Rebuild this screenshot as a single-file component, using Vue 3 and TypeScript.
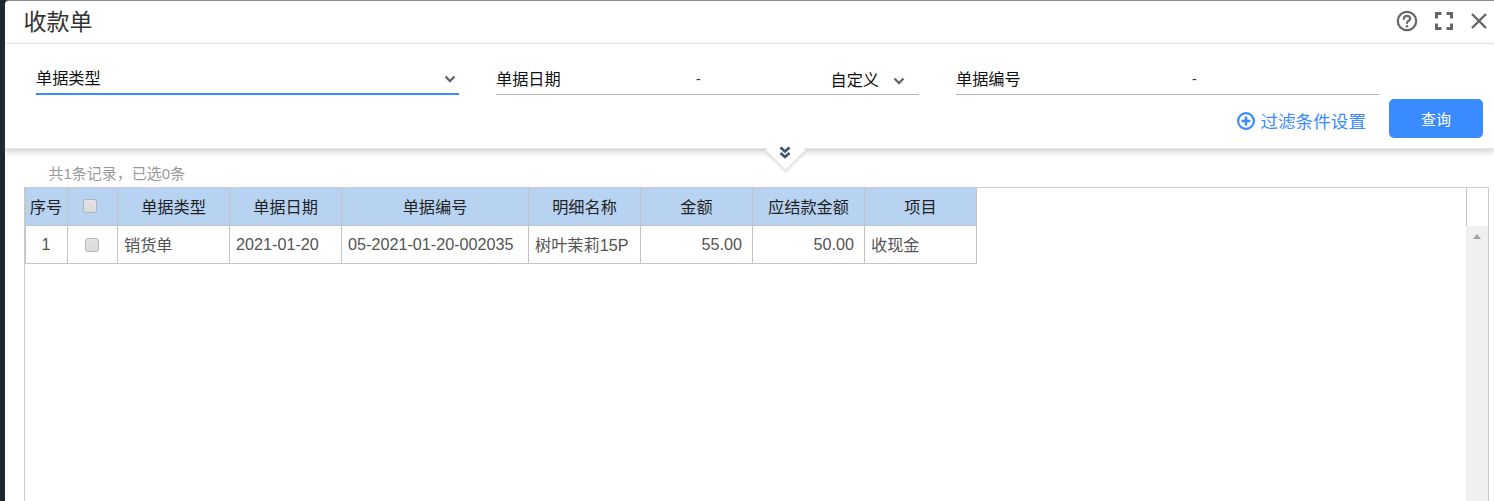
<script setup lang="ts">
interface Column { label: string; width: number; align: string; key: string }
const columns: Column[] = [
  { label: '单据类型', width: 112, align: 'left', key: 'type' },
  { label: '单据日期', width: 112, align: 'left', key: 'date' },
  { label: '单据编号', width: 187, align: 'left', key: 'code' },
  { label: '明细名称', width: 112, align: 'left', key: 'name' },
  { label: '金额', width: 112, align: 'right', key: 'amount' },
  { label: '应结款金额', width: 112, align: 'right', key: 'due' },
  { label: '项目', width: 112, align: 'left', key: 'item' },
]
const row: Record<string, string> = {
  type: '销货单', date: '2021-01-20', code: '05-2021-01-20-002035',
  name: '树叶茉莉15P', amount: '55.00', due: '50.00', item: '收现金',
}
</script>

<template>
  <div class="page">
    <div class="rail"></div>
    <div class="modal">
      <header class="head">
        <h1 class="title">收款单</h1>
        <div class="tools">
          <svg width="22" height="22" viewBox="0 0 22 22" fill="none" stroke="#666" stroke-width="2.2">
            <circle cx="11" cy="11" r="9.2" />
            <path d="M7.8 8.8c0-1.9 1.5-3 3.2-3s3.2 1 3.2 2.7c0 2.4-3.2 2.4-3.2 4.6" stroke-linecap="round" />
            <circle cx="11" cy="16.2" r="1.2" fill="#666" stroke="none" />
          </svg>
          <svg width="18" height="18" viewBox="0 0 18 18" fill="none" stroke="#666" stroke-width="3">
            <path d="M1.5 6.5v-5h5M11.5 1.5h5v5M16.5 11.5v5h-5M6.5 16.5h-5v-5" />
          </svg>
          <svg width="18" height="18" viewBox="0 0 18 18" fill="none" stroke="#666" stroke-width="2.4">
            <path d="M2 2l14 14M16 2L2 16" />
          </svg>
        </div>
      </header>

      <section class="filter">
        <div class="fields">
          <div class="field active">
            <span class="label">单据类型</span>
            <svg class="chev" width="12" height="8" viewBox="0 0 12 8" fill="none" stroke="#666" stroke-width="2.4">
              <path d="M1.5 1.5L6 6l4.5-4.5" />
            </svg>
          </div>
          <div class="field">
            <span class="label wide">单据日期</span>
            <span class="dash dash-date">-</span>
            <span class="custom">自定义</span>
            <svg class="chev" width="12" height="8" viewBox="0 0 12 8" fill="none" stroke="#666" stroke-width="2.4">
              <path d="M1.5 1.5L6 6l4.5-4.5" />
            </svg>
          </div>
          <div class="field">
            <span class="label wide">单据编号</span>
            <span class="dash dash-code">-</span>
          </div>
        </div>
        <div class="actions">
          <a class="setting">
            <svg width="18" height="18" viewBox="0 0 18 18" fill="none" stroke="#3a8bff">
              <circle cx="9" cy="9" r="7.9" stroke-width="2.2" />
              <path d="M9 4.6v8.8M4.6 9h8.8" stroke-width="2.6" />
            </svg>
            过滤条件设置
          </a>
          <button class="query">查询</button>
        </div>
        <div class="fold">
          <svg width="14" height="14" viewBox="0 0 14 14" fill="none" stroke="#3f5570" stroke-width="2.8">
            <path d="M2.5 1.5L7 5.5l4.5-4M2.5 7L7 11l4.5-4" />
          </svg>
        </div>
      </section>

      <p class="summary">共1条记录，已选0条</p>

      <div class="grid-panel">
        <div class="grid-scroll">
          <table class="grid">
            <colgroup>
              <col style="width: 42px" />
              <col style="width: 50px" />
              <col v-for="c in columns" :key="c.key" :style="{ width: c.width + 'px' }" />
            </colgroup>
            <thead>
              <tr>
                <th>序号</th>
                <th><span class="check head-check"></span></th>
                <th v-for="c in columns" :key="c.key">{{ c.label }}</th>
              </tr>
            </thead>
            <tbody>
              <tr>
                <td class="center">1</td>
                <td class="center"><span class="check"></span></td>
                <td v-for="c in columns" :key="c.key" :class="c.align">{{ row[c.key] }}</td>
              </tr>
            </tbody>
          </table>
        </div>
        <div class="scrollbar">
          <div class="corner"></div>
          <div class="track"><span class="arrow"></span></div>
        </div>
      </div>
    </div>
  </div>
</template>

<style>
html, body { margin: 0; background: #fff; overflow: hidden; }
</style>

<style scoped>
.page {
  display: flex;
  height: 501px;
  overflow: hidden;
  font-family: "Liberation Sans", "Noto Sans CJK SC", sans-serif;
  background: #1b2733;
}
.rail { width: 5px; flex: none; }
.modal {
  flex: 1;
  display: flex;
  flex-direction: column;
  background: #fff;
  border-top: 1px solid #8c8c8c;
  border-top-left-radius: 4px;
  min-width: 0;
}
.head {
  height: 42px;
  flex: none;
  display: flex;
  align-items: center;
  justify-content: space-between;
  padding: 0 6px 0 18.5px;
  border-bottom: 1px solid #e6e6e6;
}
.title { margin: -4px 0 0; font-size: 23px; font-weight: 400; color: #333; }
.tools { display: flex; align-items: center; gap: 17px; margin-top: -3px; }
.filter {
  position: relative;
  flex: none;
  height: 105px;
  box-sizing: border-box;
  padding: 24px 0 0 31px;
  box-shadow: 0 3px 6px rgba(90, 100, 110, 0.3);
  border-bottom: 1px solid #e4e4e4;
}
.fields { display: flex; gap: 37px; }
.field {
  position: relative;
  width: 423px;
  height: 26px;
  box-sizing: content-box;
  border-bottom: 1px solid #b8b8b8;
  display: flex;
  align-items: center;
  font-size: 16.2px;
  color: #111;
}
.field.active { border-bottom: 2px solid #3a8bff; height: 25px; }
.label { line-height: 22px; margin-top: -5px; }
.chev { position: absolute; right: 3px; top: 7px; }
.dash { position: absolute; top: 3px; font-size: 14px; color: #333; }
.dash-date { left: 200px; }
.dash-code { left: 236px; }
.custom { position: absolute; left: 334.5px; top: 1px; line-height: 22px; }
.field .custom + .chev { right: 14px; top: 9px; }
.actions {
  display: flex;
  justify-content: flex-end;
  align-items: center;
  gap: 23px;
  margin-top: 4px;
  padding-right: 11px;
}
.setting {
  display: flex;
  align-items: center;
  gap: 5px;
  margin-top: 4px;
  font-size: 17.6px;
  color: #3a8bff;
}
.query {
  width: 94px;
  height: 39px;
  border: 0;
  border-radius: 5px;
  background: #3a8bff;
  color: #fff;
  font: inherit;
  font-size: 15px;
}
.fold {
  position: absolute;
  left: 760px;
  bottom: -22px;
  width: 40px;
  height: 20px;
  display: flex;
  justify-content: center;
}
.fold::before {
  content: "";
  position: absolute;
  left: 6px;
  top: -14px;
  width: 28px;
  height: 28px;
  background: #fff;
  transform: rotate(45deg);
  border-right: 1px solid #dcdcdc;
  border-bottom: 1px solid #dcdcdc;
  box-shadow: 2px 2px 2px rgba(90, 100, 110, 0.12);
}
.fold svg { position: relative; margin-top: -4px; }
.summary {
  margin: 16px 0 0 43.5px;
  height: 22px;
  line-height: 18px;
  font-size: 15px;
  color: #999;
  flex: none;
}
.grid-panel {
  flex: 1;
  display: flex;
  width: 1463px;
  margin-left: 19px;
  border: 1px solid #ccc;
  border-bottom: 0;
  min-height: 0;
}
.grid-scroll { flex: 1; min-width: 0; }
.grid {
  table-layout: fixed;
  width: 951px;
  border-collapse: collapse;
  font-size: 16.2px;
  color: #555;
}
.grid th, .grid td {
  padding: 0 6px;
  box-sizing: border-box;
  border: 1px solid #c4c4c4;
  white-space: nowrap;
  overflow: hidden;
}
.grid th { height: 37px; padding: 0 6px; }
.grid td { height: 38px; }
.grid tr > :first-child { padding: 0 1px 0 0; border-left-width: 1px; }
.grid thead tr:first-child th { border-top: 0; }
.grid th {
  background: #b8d3f2;
  color: #222;
  font-weight: 400;
  text-align: center;
}
.center { text-align: center; }
.left { text-align: left; }
.right { text-align: right; padding-right: 10px !important; }
.check {
  display: inline-block;
  width: 14px;
  height: 14px;
  box-sizing: border-box;
  vertical-align: middle;
  border: 1px solid #b3b3b3;
  border-radius: 3px;
  background: linear-gradient(#e2e2e2, #dadada);
  box-shadow: inset 0 0 1px #fff;
}
.grid td .check { margin-right: 2px; }
.head-check { margin: -2px 6px 0 0; }
.scrollbar { width: 22px; flex: none; display: flex; flex-direction: column; }
.corner { height: 38px; border-left: 1px solid #c4c4c4; flex: none; }
.track {
  flex: 1;
  background: #f0f0f0;
  display: flex;
  justify-content: center;
  padding-top: 8px;
}
.arrow {
  width: 0;
  height: 0;
  border-left: 4px solid transparent;
  border-right: 4px solid transparent;
  border-bottom: 5px solid #a3a3a3;
}
</style>
